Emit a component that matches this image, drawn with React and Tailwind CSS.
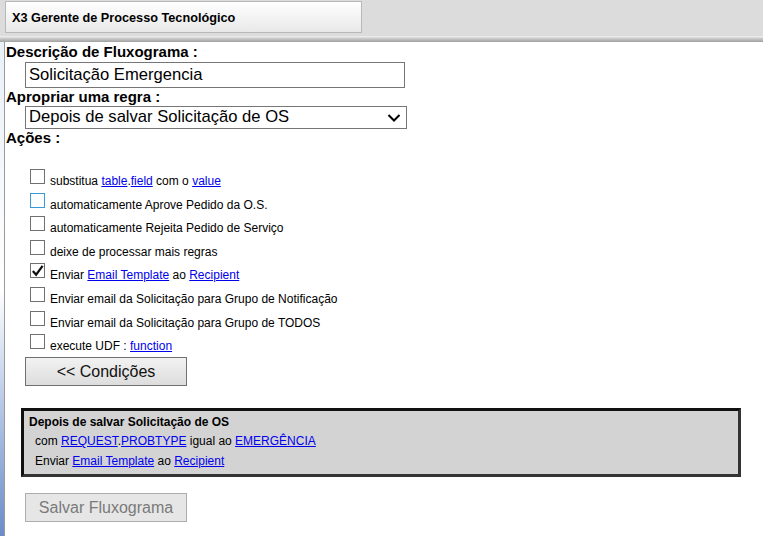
import React from "react";

const actions = [
  { key: "sub", checked: false, focus: false, body: (
    <>substitua <A>table</A>.<A>field</A> com o <A>value</A></>
  ) },
  { key: "apr", checked: false, focus: true, body: <>automaticamente Aprove Pedido da O.S.</> },
  { key: "rej", checked: false, focus: false, body: <>automaticamente Rejeita Pedido de Serviço</> },
  { key: "dei", checked: false, focus: false, body: <>deixe de processar mais regras</> },
  { key: "env", checked: true, focus: false, body: (
    <>Enviar <A>Email Template</A> ao <A>Recipient</A></>
  ) },
  { key: "not", checked: false, focus: false, body: <>Enviar email da Solicitação para Grupo de Notificação</> },
  { key: "tod", checked: false, focus: false, body: <>Enviar email da Solicitação para Grupo de TODOS</> },
  { key: "udf", checked: false, focus: false, body: (
    <>execute UDF : <A>function</A></>
  ) },
];

function A({ children }) {
  return <a href="#" className="text-[#0000ee] underline">{children}</a>;
}

function Box({ checked, focus }) {
  return (
    <span
      className={`w-[15px] h-[15px] shrink-0 bg-white border ${focus ? "border-[#3a9ad9]" : "border-[#707070]"} flex items-center justify-center`}
    >
      {checked && (
        <svg width="14" height="14" viewBox="0 0 14 14">
          <path d="M2 7 L5.5 11 L12.5 1.5" fill="none" stroke="#111" strokeWidth="2.4" />
        </svg>
      )}
    </span>
  );
}

export default function App() {
  return (
    <div className="w-[763px] h-[536px] overflow-hidden bg-white relative font-['Liberation_Sans',Arial,sans-serif] text-black">
      {/* tab bar */}
      <div className="h-[36px] bg-[#dcdcdc] flex items-end pl-[5px]">
        <div className="w-[357px] h-[32px] mb-[3px] border border-[#b8b8b8] bg-gradient-to-b from-white to-[#e8e8e8] flex items-center pl-[6px] pt-[3px] text-[12.7px] font-bold">
          X3 Gerente de Processo Tecnológico
        </div>
      </div>
      <div className="h-[6px] bg-gradient-to-b from-[#f2f2f2] via-[#c4c4c4] to-[#a0a0a0]" />

      <div className="flex">
        <div className="w-[5px] shrink-0 bg-gradient-to-b from-[#e9f0f8] via-[#ffffff] to-[#6a8cc8] border-r border-[#9a9a9a] h-[494px]" />
        <div className="flex-1 pl-[1px]">
          <div className="text-[15px] font-bold leading-[16px] mt-[2px]">Descrição de Fluxograma :</div>
          <div className="ml-[19px] mt-[2px] w-[380px] h-[26px] border border-[#767676] flex items-center px-[3px] text-[16.6px]">
            Solicitação Emergencia
          </div>
          <div className="text-[15px] font-bold leading-[16px] mt-[1px]">Apropriar uma regra :</div>
          <div className="ml-[19px] mt-[1px] w-[382px] h-[23px] border border-[#767676] flex items-center justify-between px-[3px] text-[16.6px]">
            <span>Depois de salvar Solicitação de OS</span>
            <svg width="14" height="10" viewBox="0 0 14 10" className="mr-[2px]">
              <path d="M1.5 2 L7 7.5 L12.5 2" fill="none" stroke="#000" strokeWidth="2" />
            </svg>
          </div>
          <div className="text-[15px] font-bold leading-[16px] mt-[1px]">Ações :</div>

          <div className="mt-[22px] ml-[24px] flex flex-col gap-[7.6px]">
            {actions.map((a) => (
              <div key={a.key} className="flex items-end gap-[5px] h-[16px] text-[12px] leading-[14px]">
                <Box checked={a.checked} focus={a.focus} />
                <span className="translate-y-[4px]">{a.body}</span>
              </div>
            ))}
          </div>

          <button className="ml-[19px] mt-[8px] w-[162px] h-[29px] border border-[#707070] bg-gradient-to-b from-[#f2f2f2] to-[#dddddd] text-[16px] text-[#111]">
            &lt;&lt; Condições
          </button>

          <div className="ml-[15px] mt-[22px] w-[720px] h-[69px] bg-[#d3d3d3] border-[3px] border-t-[#111] border-l-[#111] border-r-[#333] border-b-[#333] pl-[5px] pt-[3px] text-[12px] leading-[20px]">
            <div className="font-bold leading-[17px]">Depois de salvar Solicitação de OS</div>
            <div className="pl-[6px]">com <A>REQUEST</A>.<A>PROBTYPE</A> igual ao <A>EMERGÊNCIA</A></div>
            <div className="pl-[6px]">Enviar <A>Email Template</A> ao <A>Recipient</A></div>
          </div>

          <button disabled className="ml-[19px] mt-[16px] w-[162px] h-[29px] border border-[#adadad] bg-[#e6e6e6] text-[16px] text-[#7a7a7a]">
            Salvar Fluxograma
          </button>
        </div>
      </div>
    </div>
  );
}
